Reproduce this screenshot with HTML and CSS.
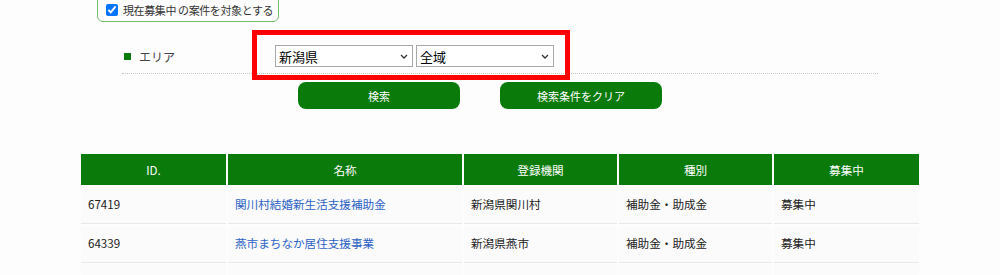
FILE: index.html
```html
<!DOCTYPE html>
<html lang="ja">

<head>
    <meta charset="UTF-8">
    <meta name="viewport" content="width=device-width, initial-scale=1.0">
    <title>検索結果</title>

    <link rel="stylesheet" href="styles.css">
</head>

<body>
    <div id="main">

        <form class="search">
            <label class="current">
                <input type="checkbox" checked>
                <span>現在募集中 の案件を対象とする</span>
            </label>

            <div class="area-row">
                <div class="area-label"><span class="mark"></span>エリア</div>

                <div class="area-selects">
                    <span class="select-wrap">
                        <select>
                            <option>新潟県</option>
                        </select>
                        <svg class="chevron" width="8" height="5" viewBox="0 0 8 5">
                            <path d="M1 1 L4 4 L7 1" fill="none" stroke="#333" stroke-width="1.3" />
                        </svg>
                    </span>
                    <span class="select-wrap">
                        <select>
                            <option>全域</option>
                        </select>
                        <svg class="chevron" width="8" height="5" viewBox="0 0 8 5">
                            <path d="M1 1 L4 4 L7 1" fill="none" stroke="#333" stroke-width="1.3" />
                        </svg>
                    </span>
                </div>

                <!-- highlight frame -->
                <div class="highlight"></div>
            </div>

            <div class="buttons">
                <button type="button" class="btn">検索</button>
                <button type="button" class="btn">検索条件をクリア</button>
            </div>
        </form>

        <table class="result">
            <tr>
                <th class="c-id">ID.</th>
                <th class="c-name">名称</th>
                <th class="c-org">登録機関</th>
                <th class="c-type">種別</th>
                <th class="c-status">募集中</th>
            </tr>
            <tr>
                <td>67419</td>
                <td><a href="#">関川村結婚新生活支援補助金</a></td>
                <td>新潟県関川村</td>
                <td>補助金・助成金</td>
                <td>募集中</td>
            </tr>
            <tr>
                <td>64339</td>
                <td><a href="#">燕市まちなか居住支援事業</a></td>
                <td>新潟県燕市</td>
                <td>補助金・助成金</td>
                <td>募集中</td>
            </tr>
            <tr>
                <td>63850</td>
                <td><a href="#">新潟市住宅リフォーム支援事業</a></td>
                <td>新潟県新潟市</td>
                <td>補助金・助成金</td>
                <td>募集中</td>
            </tr>
        </table>
    </div>
</body>

</html>
```

FILE: styles.css
```css
body {
    margin: 0;
    background-color: #fdfdfd;
    font-family: "Noto Sans CJK JP", "Noto Sans", sans-serif;
    color: #333;
    font-size: 12px;
}

#main {
    margin-top: -10px;
    margin-left: 79px;
    width: 842px;
}

.current {
    display: flex;
    align-items: flex-end;
    box-sizing: border-box;
    width: 182px;
    height: 32px;
    margin-left: 18px;
    padding: 0 0 3px 8px;
    border: 1px solid #6fbf6f;
    border-radius: 6px;
    font-size: 11px;
    color: #333;
    white-space: nowrap;
}

.current span {
    letter-spacing: -0.4px;
}

.current input {
    width: 12px;
    height: 12px;
    margin: 0 5px 2px 0;
}

.area-row {
    position: relative;
    display: flex;
    align-items: center;
    width: 756px;
    margin-top: 13px;
    margin-left: 43px;
    padding: 10px 0 6px;
    border-bottom: 1px dotted #c8c8c8;
}

.area-label {
    display: flex;
    align-items: center;
    width: 153px;
    padding-left: 2px;
    box-sizing: border-box;
    color: #444;
}

.mark {
    display: inline-block;
    width: 7px;
    height: 7px;
    margin-right: 8px;
    background-color: #0a7a0a;
}

.area-selects {
    display: flex;
    gap: 3px;
}

.select-wrap {
    position: relative;
    display: inline-block;
}

.select-wrap select {
    appearance: none;
    -webkit-appearance: none;
    width: 138px;
    height: 22px;
    margin: 0;
    padding: 0 0 0 3px;
    border: 1px solid #a9a9a9;
    border-radius: 0;
    background-color: #fff;
    font-family: inherit;
    font-size: 13px;
    color: #000;
}

.chevron {
    position: absolute;
    right: 5px;
    top: 9px;
    pointer-events: none;
}

.highlight {
    position: absolute;
    left: 130px;
    top: -5px;
    width: 308px;
    height: 40px;
    border: 5px solid #ff0000;
}

.buttons {
    display: flex;
    gap: 40px;
    margin-top: 8px;
    margin-left: 219px;
}

.btn {
    width: 162px;
    height: 27px;
    border: none;
    border-radius: 8px;
    background-color: #0a7a0a;
    color: #fff;
    font-family: inherit;
    font-size: 11px;
}

.result {
    margin-top: 43px;
    width: 842px;
    table-layout: fixed;
    border-collapse: separate;
    border-spacing: 2px;
}

.result th,
.result td {
    box-sizing: border-box;
}

.result th {
    height: 31px;
    background-color: #0a7a0a;
    color: #fff;
    font-weight: normal;
    font-size: 11.6px;
}

.c-id {
    width: 145px;
}

.c-name {
    width: 234px;
}

.c-org {
    width: 153px;
}

.c-type {
    width: 153px;
}

.c-status {
    width: 145px;
}

.result td {
    height: 37px;
    padding: 0 0 3px 7px;
    background-color: #fbfbfb;
    border-bottom: 1px solid #e8e8e8;
    color: #222;
    font-size: 11.6px;
}

.result a {
    color: #2c62c4;
    text-decoration: none;
}
```
